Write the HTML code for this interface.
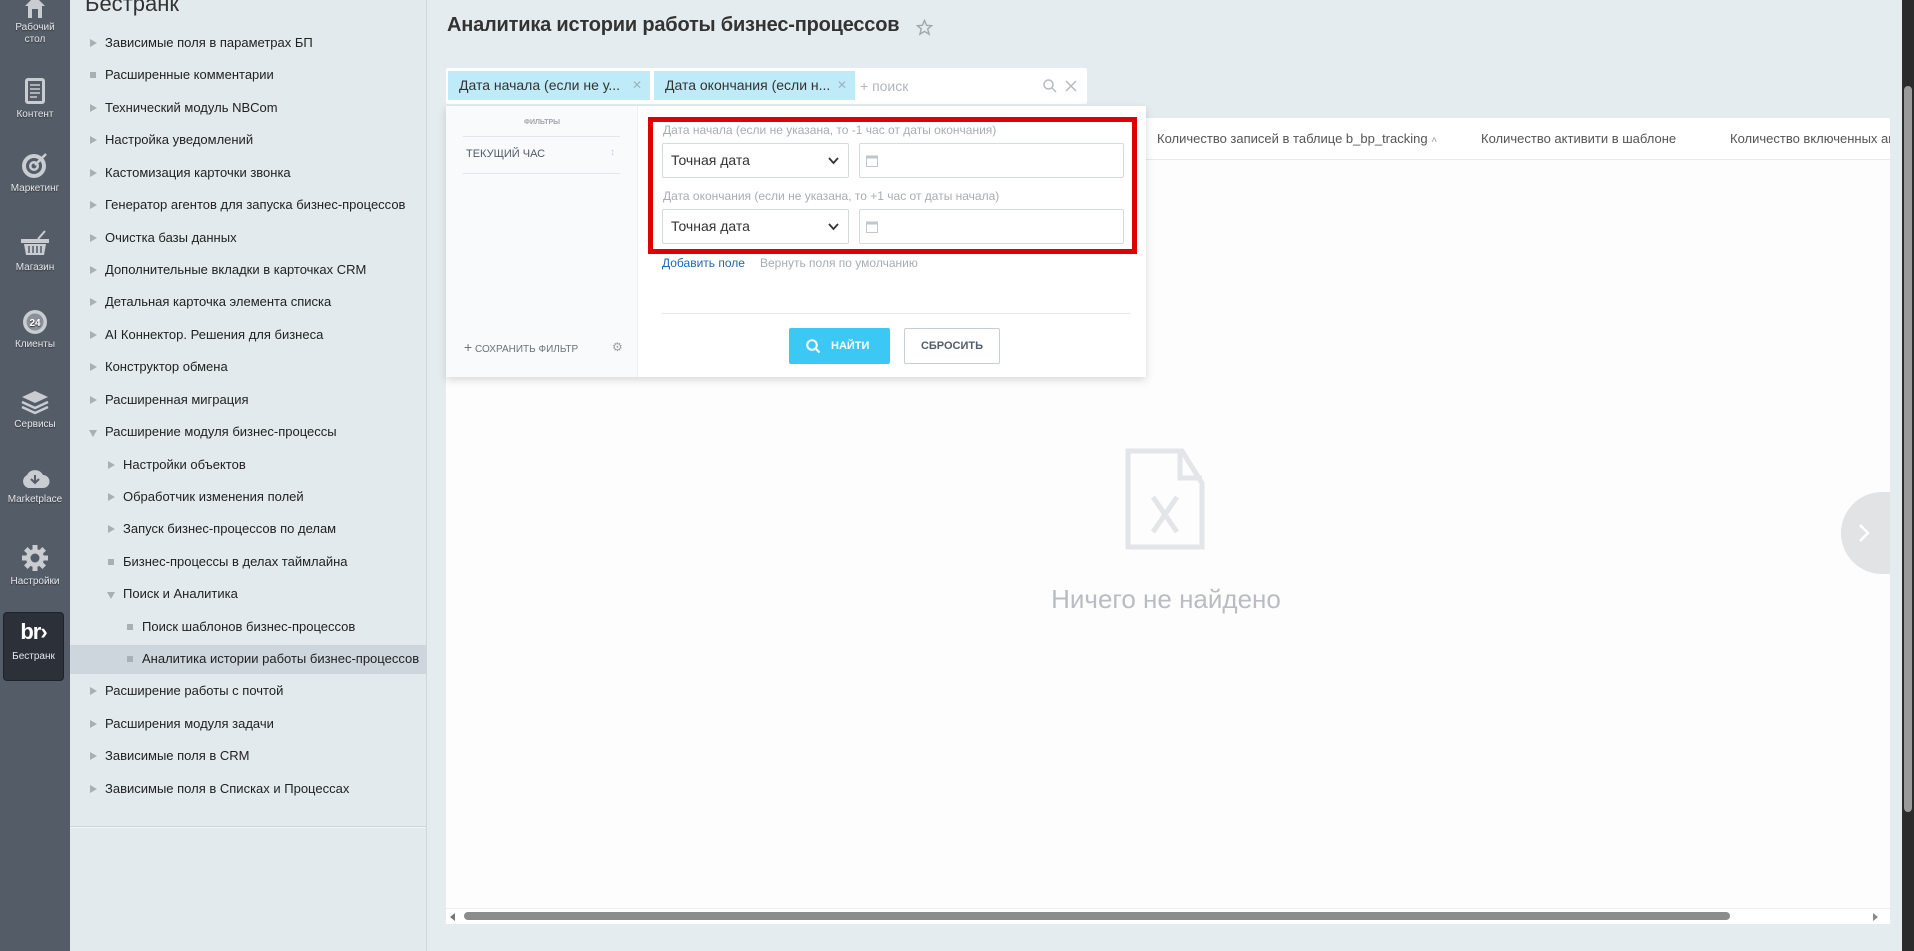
<!DOCTYPE html>
<html><head><meta charset="utf-8"><style>
*{box-sizing:border-box;margin:0;padding:0}
body{width:1914px;height:951px;overflow:hidden;position:relative;font-family:"Liberation Sans",Arial,sans-serif;background:#e5ecef}
.lb{position:absolute;left:0;top:0;width:70px;height:951px;background:#545c68}
.lbi{position:absolute;left:0;width:70px;text-align:center;color:#e4e8ec;font-size:10px;line-height:12px;text-shadow:0 1px 1px #333}
.lbi svg{display:block;margin:0 auto 4px}
.sp{position:absolute;left:70px;top:0;width:357px;height:951px;background:#e3eaed;border-right:1px solid #cfd7dc}
.sp h1{position:absolute;left:15px;top:-9px;font-weight:normal;font-size:22px;color:#333}
.it{position:absolute;font-size:13px;color:#222;height:32px;line-height:32px;white-space:nowrap}
.ar{position:absolute;width:0;height:0;border-left:7px solid #a8b0b6;border-top:4px solid transparent;border-bottom:4px solid transparent;top:12px}
.ad{position:absolute;width:0;height:0;border-top:7px solid #a8b0b6;border-left:4px solid transparent;border-right:4px solid transparent;top:14px}
.bu{position:absolute;width:6px;height:6px;background:#a8b0b6;top:13px}
.sel{position:absolute;left:70px;top:645px;width:356px;height:29px;background:#cdd6dc}
.title{position:absolute;left:447px;top:14px;font-size:20px;font-weight:bold;color:#333;letter-spacing:-0.2px}
.fbar{position:absolute;left:446px;top:68px;width:641px;height:36px;background:#fff;border-radius:2px}
.chip{position:absolute;top:3px;height:29px;background:#bfeaf8;font-size:14px;color:#333;line-height:29px;padding-left:11px}
.chip i{position:absolute;right:8px;top:0;font-style:normal;color:#9fb3bb;font-size:12px}
.tbl{position:absolute;left:446px;top:118px;width:1444px;height:806px;background:#fdfdfd}
.th{position:absolute;top:0;left:0;right:0;height:42px;background:#fff;border-bottom:1px solid #e6e9eb;font-size:13px;color:#555;line-height:42px;white-space:nowrap;overflow:hidden}
.pop{position:absolute;left:446px;top:106px;width:700px;height:271px;background:#fff;box-shadow:0 3px 8px rgba(0,0,0,.15)}
.pl{position:absolute;left:0;top:0;width:192px;height:271px;background:#f8fafb;border-right:1px solid #eef1f3}
.lab{position:absolute;left:663px;font-size:12px;color:#a8adb2}
.selc{position:absolute;left:662px;width:187px;height:35px;border:1px solid #d5dadd;border-radius:2px;background:#fff;font-size:14px;color:#333;line-height:33px;padding-left:8px}
.dt{position:absolute;left:859px;width:265px;height:35px;border:1px solid #d5dadd;border-radius:2px;background:#fff}
.red{position:absolute;left:648px;top:117px;width:489px;height:137px;border:5px solid #e00000}
</style></head><body>
<div class="lb">
 <div class="lbi" style="top:0"><svg width="26" height="18" viewBox="0 0 26 18"><path d="M3 6 L13 -4 L23 6 L20 6 L20 18 L6 18 L6 6Z" fill="#c9cdd2"/><rect x="10" y="9" width="6" height="9" fill="#545c68"/></svg>Рабочий<br>стол</div>
 <div class="lbi" style="top:77px"><svg width="22" height="28" viewBox="0 0 22 28"><rect x="1" y="1" width="20" height="26" rx="3" fill="#c9cdd2"/><rect x="4" y="4" width="14" height="20" fill="#545c68"/><path d="M6 8h10M6 12h10M6 16h10M6 20h7" stroke="#c9cdd2" stroke-width="1.6"/></svg>Контент</div>
 <div class="lbi" style="top:151px"><svg width="28" height="28" viewBox="0 0 28 28"><circle cx="13" cy="15" r="12" fill="#c9cdd2"/><circle cx="13" cy="15" r="8" fill="#545c68"/><circle cx="13" cy="15" r="5" fill="#c9cdd2"/><circle cx="13" cy="15" r="2.5" fill="#545c68"/><path d="M14 14 L25 3" stroke="#c9cdd2" stroke-width="2.5"/></svg>Маркетинг</div>
 <div class="lbi" style="top:230px"><svg width="30" height="28" viewBox="0 0 30 28"><path d="M18 9 L25 1" stroke="#c9cdd2" stroke-width="2"/><rect x="1" y="9" width="28" height="4" fill="#c9cdd2"/><path d="M4 14 H26 L24 25 H6Z" fill="#c9cdd2"/><path d="M9 16v7M13 16v7M17 16v7M21 16v7" stroke="#545c68" stroke-width="1.5"/></svg>Магазин</div>
 <div class="lbi" style="top:309px"><svg width="28" height="26" viewBox="0 0 28 26"><circle cx="14" cy="13" r="12" fill="#c9cdd2"/><circle cx="14" cy="13" r="8.5" fill="#8a919a"/><text x="14" y="17" text-anchor="middle" font-size="10" font-weight="bold" fill="#fff" font-family="Liberation Sans">24</text></svg>Клиенты</div>
 <div class="lbi" style="top:389px"><svg width="30" height="26" viewBox="0 0 30 26"><path d="M15 2 L28 8 L15 14 L2 8Z" fill="#c9cdd2"/><path d="M2 13 L15 19 L28 13" stroke="#c9cdd2" stroke-width="2.5" fill="none"/><path d="M2 18 L15 24 L28 18" stroke="#c9cdd2" stroke-width="2.5" fill="none"/></svg>Сервисы</div>
 <div class="lbi" style="top:466px"><svg width="30" height="24" viewBox="0 0 30 24"><path d="M8 22 A7 7 0 0 1 7 9 A9 9 0 0 1 23 9 A6.5 6.5 0 0 1 23 22Z" fill="#c9cdd2"/><path d="M15 9v8M11 13l4 4 4-4" stroke="#545c68" stroke-width="2" fill="none"/></svg>Marketplace</div>
 <div class="lbi" style="top:544px"><svg width="28" height="28" viewBox="0 0 28 28"><g fill="#c9cdd2"><circle cx="14" cy="14" r="9"/><rect x="11.5" y="1" width="5" height="26"/><rect x="1" y="11.5" width="26" height="5"/><rect x="11.5" y="1" width="5" height="26" transform="rotate(45 14 14)"/><rect x="11.5" y="1" width="5" height="26" transform="rotate(-45 14 14)"/></g><circle cx="14" cy="14" r="4.5" fill="#545c68"/></svg>Настройки</div>
 <div style="position:absolute;left:3px;top:612px;width:61px;height:69px;background:#2c3038;border-radius:4px;border:1px solid #1f2329;text-align:center;color:#fff">
  <div style="font-size:22px;font-weight:bold;margin-top:6px;letter-spacing:-1px">br&#x203A;</div>
  <div style="font-size:10px;margin-top:6px;color:#e4e8ec">Бестранк</div></div>
</div>
<div class="sp"><h1>Бестранк</h1>
 <div style="position:absolute;left:0;top:826px;width:356px;height:2px;background:#f3f6f7;border-top:1px solid #cdd5da"></div>
</div>
<div class="sel"></div>
<div class="it" style="left:105px;top:27px"><span class="ar" style="left:-15px"></span>Зависимые поля в параметрах БП</div>
<div class="it" style="left:105px;top:59px"><span class="bu" style="left:-15px"></span>Расширенные комментарии</div>
<div class="it" style="left:105px;top:92px"><span class="ar" style="left:-15px"></span>Технический модуль NBCom</div>
<div class="it" style="left:105px;top:124px"><span class="ar" style="left:-15px"></span>Настройка уведомлений</div>
<div class="it" style="left:105px;top:157px"><span class="ar" style="left:-15px"></span>Кастомизация карточки звонка</div>
<div class="it" style="left:105px;top:189px"><span class="ar" style="left:-15px"></span>Генератор агентов для запуска бизнес-процессов</div>
<div class="it" style="left:105px;top:222px"><span class="ar" style="left:-15px"></span>Очистка базы данных</div>
<div class="it" style="left:105px;top:254px"><span class="ar" style="left:-15px"></span>Дополнительные вкладки в карточках CRM</div>
<div class="it" style="left:105px;top:286px"><span class="ar" style="left:-15px"></span>Детальная карточка элемента списка</div>
<div class="it" style="left:105px;top:319px"><span class="ar" style="left:-15px"></span>AI Коннектор. Решения для бизнеса</div>
<div class="it" style="left:105px;top:351px"><span class="ar" style="left:-15px"></span>Конструктор обмена</div>
<div class="it" style="left:105px;top:384px"><span class="ar" style="left:-15px"></span>Расширенная миграция</div>
<div class="it" style="left:105px;top:416px"><span class="ad" style="left:-16px"></span>Расширение модуля бизнес-процессы</div>
<div class="it" style="left:123px;top:449px"><span class="ar" style="left:-15px"></span>Настройки объектов</div>
<div class="it" style="left:123px;top:481px"><span class="ar" style="left:-15px"></span>Обработчик изменения полей</div>
<div class="it" style="left:123px;top:513px"><span class="ar" style="left:-15px"></span>Запуск бизнес-процессов по делам</div>
<div class="it" style="left:123px;top:546px"><span class="bu" style="left:-15px"></span>Бизнес-процессы в делах таймлайна</div>
<div class="it" style="left:123px;top:578px"><span class="ad" style="left:-16px"></span>Поиск и Аналитика</div>
<div class="it" style="left:142px;top:611px"><span class="bu" style="left:-15px"></span>Поиск шаблонов бизнес-процессов</div>
<div class="it" style="left:142px;top:643px"><span class="bu" style="left:-15px"></span>Аналитика истории работы бизнес-процессов</div>
<div class="it" style="left:105px;top:675px"><span class="ar" style="left:-15px"></span>Расширение работы с почтой</div>
<div class="it" style="left:105px;top:708px"><span class="ar" style="left:-15px"></span>Расширения модуля задачи</div>
<div class="it" style="left:105px;top:740px"><span class="ar" style="left:-15px"></span>Зависимые поля в CRM</div>
<div class="it" style="left:105px;top:773px"><span class="ar" style="left:-15px"></span>Зависимые поля в Списках и Процессах</div>

<div class="title">Аналитика истории работы бизнес-процессов</div>
<svg style="position:absolute;left:916px;top:19px" width="17" height="17" viewBox="0 0 24 24"><path d="M12 2 L15 9 L22 9.5 L16.5 14 L18.5 21.5 L12 17.5 L5.5 21.5 L7.5 14 L2 9.5 L9 9Z" fill="none" stroke="#a0a8ae" stroke-width="2"/></svg>

<div class="tbl">
 <div class="th"><span style="position:absolute;left:711px">Количество записей в таблице b_bp_tracking <span style="color:#999;font-size:10px">&#x2C4;</span></span><span style="position:absolute;left:1035px">Количество активити в шаблоне</span><span style="position:absolute;left:1284px">Количество включенных активити</span></div>
 <svg style="position:absolute;left:679px;top:330px" width="80" height="102" viewBox="0 0 80 102"><path d="M3 3 H57 L77 35 V99 H3Z" fill="none" stroke="#e3e5e8" stroke-width="5"/><path d="M55 3 V30 H77" fill="none" stroke="#e3e5e8" stroke-width="5"/><path d="M28 49 L52 84 M52 49 L28 84" stroke="#e3e5e8" stroke-width="5"/></svg>
 <div style="position:absolute;left:520px;top:466px;width:400px;text-align:center;font-size:26px;color:#b9bdc2;white-space:nowrap">Ничего не найдено</div>
 <div style="position:absolute;left:1395px;top:374px;width:49px;height:82px;background:#e2e3e5;border-radius:41px 0 0 41px"><svg style="position:absolute;left:17px;top:31px" width="12" height="20" viewBox="0 0 12 20"><path d="M2 2 L10 10 L2 18" stroke="#fff" stroke-width="2.5" fill="none"/></svg></div>
 <div style="position:absolute;left:0;right:0;bottom:0;height:16px;border-top:1px solid #eceeef;background:#fff">
  <div style="position:absolute;left:4px;top:4px;border-right:5px solid #777;border-top:4px solid transparent;border-bottom:4px solid transparent"></div>
  <div style="position:absolute;left:18px;top:3px;width:1266px;height:8px;border-radius:4px;background:#8c8c8c"></div>
  <div style="position:absolute;right:12px;top:4px;border-left:5px solid #888;border-top:4px solid transparent;border-bottom:4px solid transparent"></div>
 </div>
</div>

<div class="fbar">
 <div class="chip" style="left:2px;width:202px">Дата начала (если не у...<i>✕</i></div>
 <div class="chip" style="left:208px;width:201px">Дата окончания (если н...<i>✕</i></div>
 <div style="position:absolute;left:414px;top:0;line-height:36px;font-size:14px;color:#b0b6bb">+ поиск</div>
 <svg style="position:absolute;left:597px;top:11px" width="14" height="14" viewBox="0 0 14 14"><circle cx="5.5" cy="5.5" r="4.5" fill="none" stroke="#b5bbc0" stroke-width="1.5"/><path d="M9 9 L13 13" stroke="#b5bbc0" stroke-width="1.5"/></svg>
 <svg style="position:absolute;left:619px;top:12px" width="12" height="12" viewBox="0 0 12 12"><path d="M1 1 L11 11 M11 1 L1 11" stroke="#b5bbc0" stroke-width="1.5"/></svg>
</div>

<div class="pop">
 <div class="pl">
  <div style="position:absolute;left:0;width:192px;top:13px;text-align:center;font-size:7px;color:#a0a6ab;font-weight:bold">ФИЛЬТРЫ</div>
  <div style="position:absolute;left:17px;top:30px;width:157px;border-top:1px solid #e3e7ea"></div>
  <div style="position:absolute;left:20px;top:42px;font-size:11px;color:#535c69">ТЕКУЩИЙ ЧАС</div>
  <div style="position:absolute;left:164px;top:41px;font-size:10px;color:#ccd">&#x2195;</div>
  <div style="position:absolute;left:17px;top:67px;width:157px;border-top:1px solid #e3e7ea"></div>
  <div style="position:absolute;left:18px;top:233px;font-size:10px;color:#6b737c"><b style="font-size:14px;font-weight:normal">+</b> СОХРАНИТЬ ФИЛЬТР</div>
  <div style="position:absolute;left:166px;top:234px;font-size:12px;color:#9aa1a7">&#x2699;</div>
 </div>
</div>
<div class="lab" style="top:123px">Дата начала (если не указана, то -1 час от даты окончания)</div>
<div class="selc" style="top:143px">Точная дата<svg style="position:absolute;right:9px;top:13px" width="11" height="8" viewBox="0 0 11 8"><path d="M1 1 L5.5 6 L10 1" stroke="#333" stroke-width="1.8" fill="none"/></svg></div>
<div class="dt" style="top:143px"><svg style="position:absolute;left:6px;top:10px" width="12" height="13" viewBox="0 0 12 13"><rect x="0.5" y="2" width="11" height="10.5" fill="none" stroke="#c2c7cb"/><rect x="0.5" y="2" width="11" height="2.5" fill="#c2c7cb"/></svg></div>
<div class="lab" style="top:189px">Дата окончания (если не указана, то +1 час от даты начала)</div>
<div class="selc" style="top:209px">Точная дата<svg style="position:absolute;right:9px;top:13px" width="11" height="8" viewBox="0 0 11 8"><path d="M1 1 L5.5 6 L10 1" stroke="#333" stroke-width="1.8" fill="none"/></svg></div>
<div class="dt" style="top:209px"><svg style="position:absolute;left:6px;top:10px" width="12" height="13" viewBox="0 0 12 13"><rect x="0.5" y="2" width="11" height="10.5" fill="none" stroke="#c2c7cb"/><rect x="0.5" y="2" width="11" height="2.5" fill="#c2c7cb"/></svg></div>
<div class="red"></div>
<div style="position:absolute;left:662px;top:256px;font-size:12px;color:#2067b0">Добавить поле</div>
<div style="position:absolute;left:760px;top:256px;font-size:12px;color:#a8adb2">Вернуть поля по умолчанию</div>
<div style="position:absolute;left:662px;top:313px;width:468px;border-top:1px solid #e8ebed"></div>
<div style="position:absolute;left:789px;top:328px;width:101px;height:36px;background:#3bc8f5;border-radius:2px;color:#fff;font-size:11px;font-weight:bold;line-height:36px;padding-left:42px"><svg style="position:absolute;left:17px;top:11px" width="15" height="15" viewBox="0 0 15 15"><circle cx="6" cy="6" r="4.8" fill="none" stroke="#fff" stroke-width="2"/><path d="M9.5 9.5 L13.5 13.5" stroke="#fff" stroke-width="2.2"/></svg>НАЙТИ</div>
<div style="position:absolute;left:904px;top:328px;width:96px;height:36px;background:#fff;border:1px solid #c6cdd3;border-radius:2px;color:#535c69;font-size:11px;font-weight:bold;line-height:34px;text-align:center">СБРОСИТЬ</div>

<div style="position:absolute;left:1902px;top:0;width:12px;height:951px;background:#2b2b2b"><div style="position:absolute;left:2px;top:86px;width:8px;height:726px;background:#9a9a9a;border-radius:4px"></div></div>
</body></html>
